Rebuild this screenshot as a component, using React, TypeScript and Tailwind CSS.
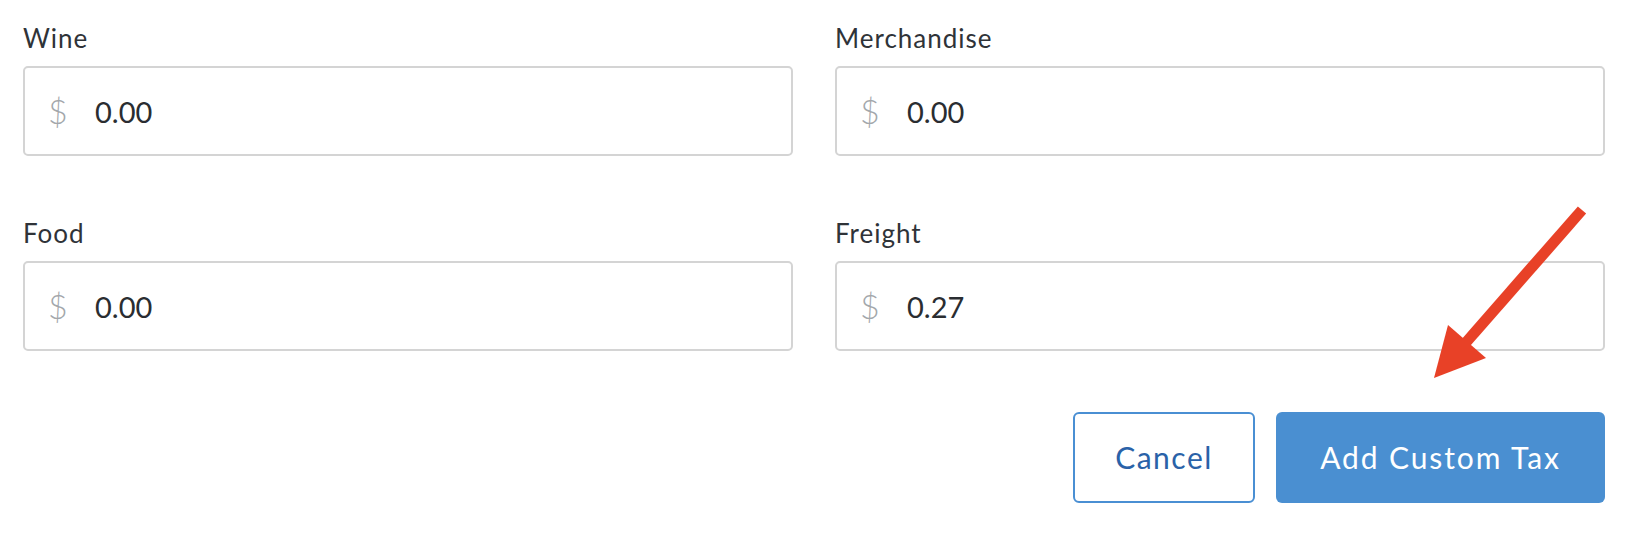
import React from 'react';

interface TaxField {
  label: string;
  value: string;
}

const fields: TaxField[] = [
  { label: 'Wine', value: '0.00' },
  { label: 'Merchandise', value: '0.00' },
  { label: 'Food', value: '0.00' },
  { label: 'Freight', value: '0.27' },
];

function MoneyInput({ label, value }: TaxField) {
  return (
    <div className="flex flex-col">
      <label className="text-[26px] leading-none tracking-[1px] text-[#2f3338] mb-[15px]">{label}</label>
      <div className="h-[90px] flex items-center border-2 border-[#d4d4d4] rounded-[5px] bg-white">
        <span className="w-[70px] pl-[23px] text-[34px] font-light text-[#a3a7ab] leading-none">$</span>
        <span className="text-[29px] text-[#2a2d31] leading-none">{value}</span>
      </div>
    </div>
  );
}

export default function App() {
  return (
    <div
      className="relative w-[1636px] h-[538px] bg-white overflow-hidden"
      style={{ fontFamily: 'Lato, "Open Sans", sans-serif' }}
    >
      <div className="pt-[25px] pl-[23px] pr-[31px]">
        <div className="grid grid-cols-2 gap-x-[42px] gap-y-[64px]">
          {fields.map((f) => (
            <MoneyInput key={f.label} {...f} />
          ))}
        </div>
        <div className="flex justify-end gap-[21px] mt-[61px]">
          <button className="w-[182px] h-[91px] rounded-[6px] border-2 border-[#4a8fd3] bg-white text-[#2a62a8] text-[30px] tracking-[1.5px]">
            Cancel
          </button>
          <button className="w-[329px] h-[91px] rounded-[6px] bg-[#4a8fd1] text-white text-[30px] tracking-[1.9px]">
            Add Custom Tax
          </button>
        </div>
      </div>

      {/* annotation arrow */}
      <svg className="absolute inset-0 pointer-events-none" width="1636" height="538" viewBox="0 0 1636 538">
        <line x1="1582" y1="210" x2="1462" y2="347" stroke="#e84127" strokeWidth="11" />
        <polygon points="1434,378 1448,325 1486,358" fill="#e84127" />
      </svg>
    </div>
  );
}
